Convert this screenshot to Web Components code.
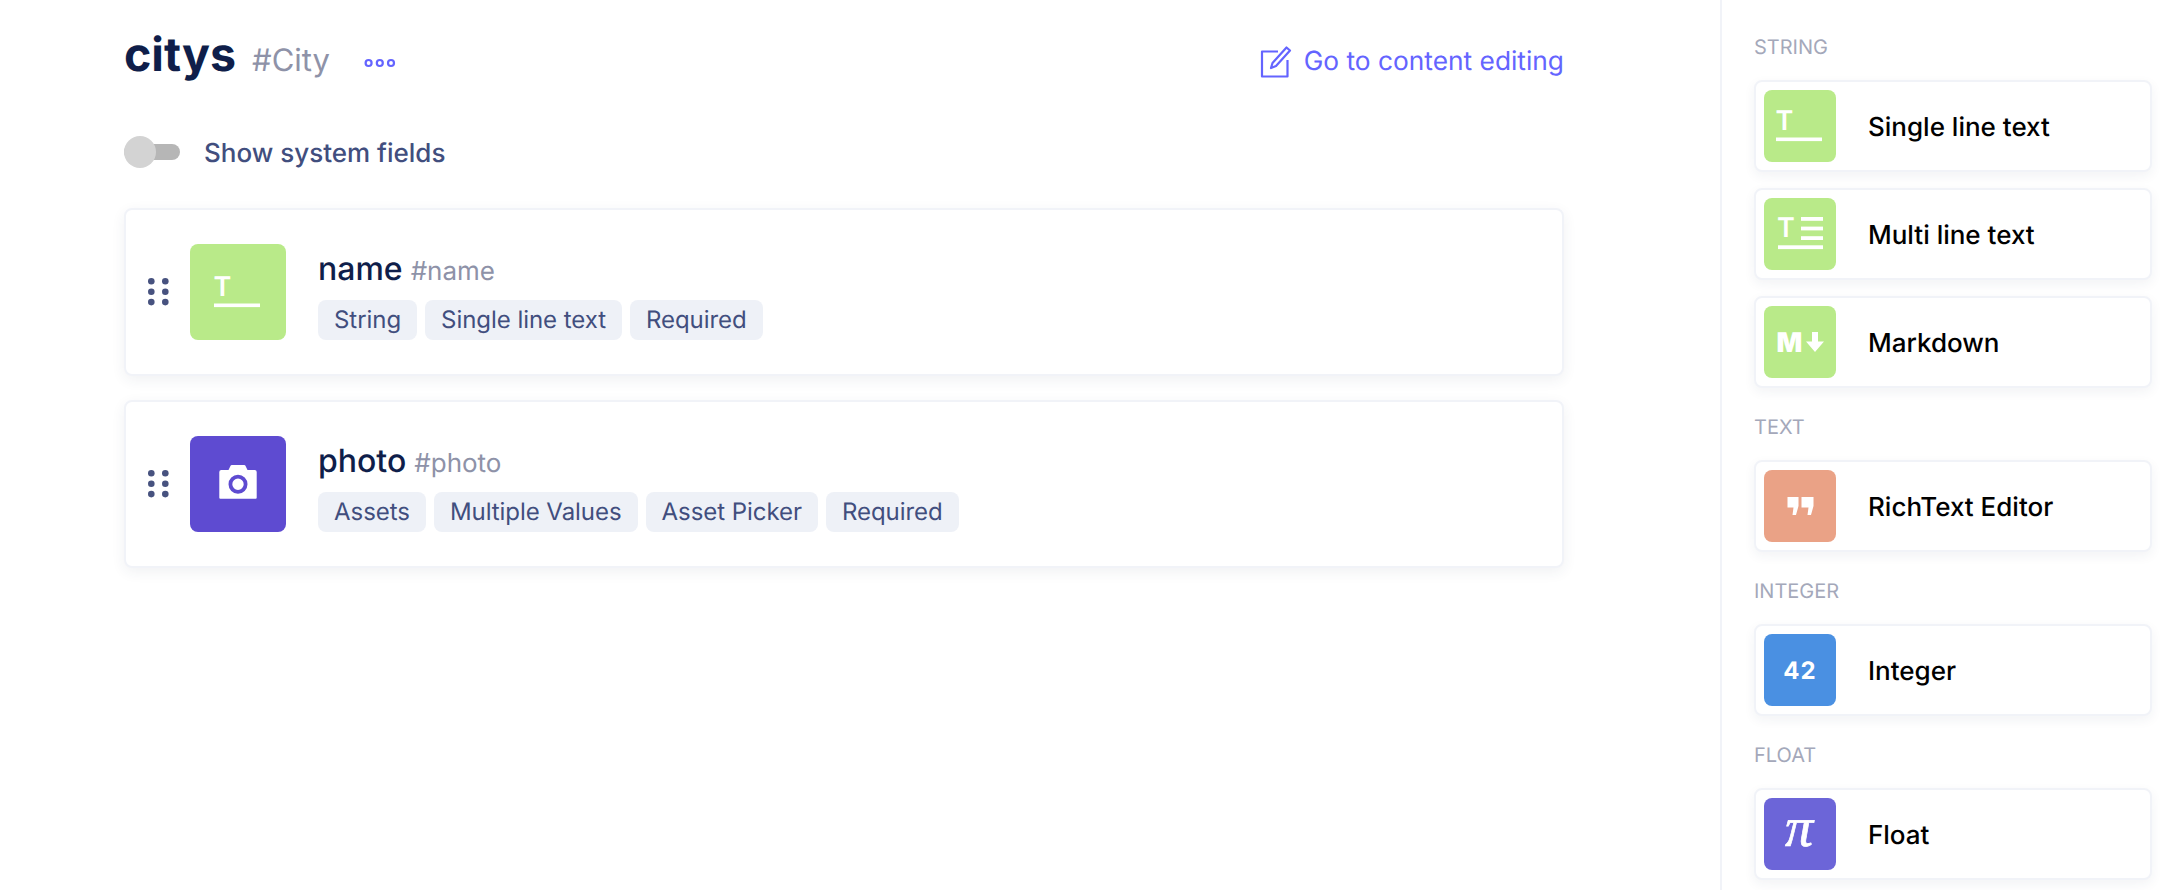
<!DOCTYPE html>
<html lang="en"><head><meta charset="utf-8"><title>citys</title>
<style>
html,body{margin:0;padding:0;height:890px;overflow:hidden;background:#fff;font-family:Inter,"Liberation Sans",sans-serif;text-rendering:geometricPrecision}
schema-page{height:890px}
</style></head><body>
<schema-page>
  <page-header slot="main"></page-header>
  <system-toggle slot="main">Show system fields</system-toggle>
  <field-card slot="main" icon="single" name="name" api="#name" tags="String|Single line text|Required" style="margin-top:40px"></field-card>
  <field-card slot="main" icon="camera" name="photo" api="#photo" tags="Assets|Multiple Values|Asset Picker|Required" style="margin-top:24px"></field-card>

  <type-label slot="side" style="margin-top:37px">STRING</type-label>
  <type-card slot="side" icon="single" style="margin-top:23px">Single line text</type-card>
  <type-card slot="side" icon="multi" style="margin-top:16px">Multi line text</type-card>
  <type-card slot="side" icon="markdown" style="margin-top:16px">Markdown</type-card>
  <type-label slot="side" style="margin-top:29px">TEXT</type-label>
  <type-card slot="side" icon="quote" style="margin-top:23px">RichText Editor</type-card>
  <type-label slot="side" style="margin-top:29px">INTEGER</type-label>
  <type-card slot="side" icon="int" style="margin-top:23px">Integer</type-card>
  <type-label slot="side" style="margin-top:29px">FLOAT</type-label>
  <type-card slot="side" icon="float" style="margin-top:23px">Float</type-card>
</schema-page>
<script>
const GREEN='#B9EA89';
const ICONS={
 single:{bg:GREEN,svg:`<text x="11.500" y="39.500" font-size="27" font-weight="600" font-family="Inter" fill="#fff">T</text><rect x="12" y="47.500" width="46" height="3.600" fill="#fff"/>`},
 multi:{bg:GREEN,svg:`<text x="13" y="39" font-size="27" font-weight="600" font-family="Inter" fill="#fff">T</text><g fill="#fff"><rect x="37" y="19" width="22" height="3.800"/><rect x="37" y="28.600" width="22" height="3.800"/><rect x="37" y="38.200" width="22" height="3.800"/><rect x="14" y="47.300" width="45" height="3.800"/></g>`},
 markdown:{bg:GREEN,svg:`<text x="12.500" y="45.500" font-size="27" font-weight="900" font-family="Inter" fill="#fff">M</text><path d="M48 26h6v9.500H60l-9 10.500-9-10.500H48z" fill="#fff"/>`},
 quote:{bg:'#EAA286',svg:`<path fill="#fff" d="M23.500 27H34.500V36L32 45H28.500L29.500 37.500H23.500ZM37.500 27H49.500V36L47 45H43.500L44.500 37.500H37.500Z"/>`},
 int:{bg:'#4A90E2',svg:`<text x="36" y="44.500" text-anchor="middle" font-size="24" font-weight="700" letter-spacing="1" font-family="Inter" fill="#fff">42</text>`},
 float:{bg:'#6C65D8',svg:`<text x="35" y="48" text-anchor="middle" font-size="56" font-style="italic" font-family="'Liberation Serif'" fill="#fff" stroke="#fff" stroke-width=".7">π</text>`},
 camera:{bg:'#5E4BD1',svg:`<path fill="#fff" d="M17.300 24a2 2 0 0 1 2-2h7.200l2.200-4.400a1.500 1.500 0 0 1 1-.6h12.600a1.500 1.500 0 0 1 1 .6l2.200 4.400h7.200a2 2 0 0 1 2 2v25.700a1 1 0 0 1-1 1H18.300a1 1 0 0 1-1-1z"/><circle cx="36" cy="36.300" r="7.600" fill="none" stroke="#5E4BD1" stroke-width="3.800"/>`}
};
function def(name,cls){customElements.define(name,cls)}
class Base extends HTMLElement{
  constructor(){super();this.attachShadow({mode:'open'})}
}
def('schema-page',class extends Base{connectedCallback(){this.shadowRoot.innerHTML=`<style>
:host{display:grid;grid-template-columns:1720px 464px;width:2184px;overflow:hidden}
main{padding:0 156px 0 124px;min-width:0}
aside{border-left:2px solid #F1F3F8;padding:0 32px 0 32px;height:890px;box-sizing:border-box}
</style><main><slot name="main"></slot></main><aside><slot name="side"></slot></aside>`}});

def('page-header',class extends Base{connectedCallback(){this.shadowRoot.innerHTML=`<style>
:host{display:flex;align-items:baseline;padding-top:23px;height:63px;line-height:64px}
h1{margin:0;font:700 46.500px/64px Inter,sans-serif;color:#0F1E4A}
.api{font:400 31px/64px Inter,sans-serif;color:#8E92A8;margin-left:16px}
.more{margin-left:34px;display:block;align-self:center;margin-top:16px}
a{margin-left:auto;display:flex;align-items:center;gap:12px;color:#6464FF;font:400 26.300px/32px Inter,sans-serif;text-decoration:none;align-self:center;margin-top:14px}
svg{display:block}
</style><h1>citys</h1><span class="api">#City</span>
<svg class="more" width="32" height="10" viewBox="0 0 32 10" fill="none" stroke="#6464FF" stroke-width="2.200"><circle cx="4.600" cy="5" r="3"/><circle cx="15.800" cy="5" r="3"/><circle cx="27" cy="5" r="3"/></svg>
<a><svg width="32" height="32" viewBox="0 0 32 32" fill="none" stroke="#6464FF" stroke-width="2.200"><path d="M18 5.500H2v25h25.500V14" stroke-linejoin="round"/><path d="M26.500 1.500l3.500 3-14 15.500-5 2 1.500-5z" stroke-linejoin="round"/></svg>Go to content editing</a>`}});

def('system-toggle',class extends Base{connectedCallback(){this.shadowRoot.innerHTML=`<style>
:host{display:flex;align-items:center;gap:24px;margin:50px 0 0 0;height:32px;color:#414E7E;font:450 26px/32px Inter,sans-serif}
.t{position:relative;width:56px;height:16px;border-radius:8px;background:#B6B6B6;display:block}
.t::before{content:"";position:absolute;left:0;top:-8px;width:32px;height:32px;border-radius:50%;background:#D3D3D3}
span.l{padding-top:3px}
</style><span class="t"></span><span class="l"><slot></slot></span>`}});

class Glyph extends Base{
  connectedCallback(){const i=ICONS[this.getAttribute('icon')];const size=this.getAttribute('size')||72;
    this.shadowRoot.innerHTML=`<style>
:host{display:flex;align-items:center;justify-content:center;flex:none;width:${size}px;height:${size}px;border-radius:8px;background:${i.bg}}
svg{display:block}
</style><svg width="72" height="72" viewBox="0 0 72 72">${i.svg}</svg>`}
}
def('field-icon',Glyph);

def('tag-chip',class extends Base{connectedCallback(){this.shadowRoot.innerHTML=`<style>
:host{display:block;height:40px;padding:0 16px;border-radius:8px;background:#EEF1F7;color:#414E7E;font:400 24px/40px Inter,sans-serif;letter-spacing:-.05px;white-space:nowrap}
</style><slot></slot>`}});

def('field-card',class extends Base{connectedCallback(){
 const tags=this.getAttribute('tags').split('|').map(t=>`<tag-chip>${t}</tag-chip>`).join('');
 const dots=[0,1,2].flatMap(r=>[0,1].map(c=>`<circle cx="${3.300+c*14}" cy="${3.300+r*10.400}" r="3.300"/>`)).join('');
 this.shadowRoot.innerHTML=`<style>
:host{display:flex;align-items:center;box-sizing:border-box;height:168px;padding:0 0 0 22px;border:2px solid #F1F3F8;border-radius:8px;background:#fff;box-shadow:0 4px 14px rgba(40,50,90,.07)}
.drag{display:block;flex:none;margin-right:21px}
.body{margin-left:32px;display:flex;flex-direction:column}
.head{display:flex;align-items:baseline;gap:8px;height:35px;padding-top:5px;margin-bottom:16px}
b{font:500 32px/40px Inter,sans-serif;color:#0F1E4A}
i{font:400 26px/40px Inter,sans-serif;color:#8E92A8}
.tags{display:flex;gap:8px}
</style><svg class="drag" width="21" height="28" viewBox="0 0 21 28" fill="#47527F">${dots}</svg>
<field-icon size="96" icon="${this.getAttribute('icon')}"></field-icon>
<div class="body"><div class="head"><b>${this.getAttribute('name')}</b><i>${this.getAttribute('api')}</i></div><div class="tags">${tags}</div></div>`}});

def('type-label',class extends Base{connectedCallback(){this.shadowRoot.innerHTML=`<style>
:host{display:block;height:20px;font:400 20px/20px Inter,sans-serif;color:#A4A8BA}
</style><slot></slot>`}});

def('type-card',class extends Base{connectedCallback(){this.shadowRoot.innerHTML=`<style>
:host{display:flex;align-items:center;box-sizing:border-box;height:92px;padding-left:8px;border:2px solid #F1F3F8;border-radius:8px;background:#fff;box-shadow:0 4px 12px rgba(40,50,90,.06);color:#000;font:450 26px/32px Inter,sans-serif}
span{margin-left:32px;padding-top:4px}
</style><field-icon icon="${this.getAttribute('icon')}"></field-icon><span><slot></slot></span>`}});
</script>
</body></html>
